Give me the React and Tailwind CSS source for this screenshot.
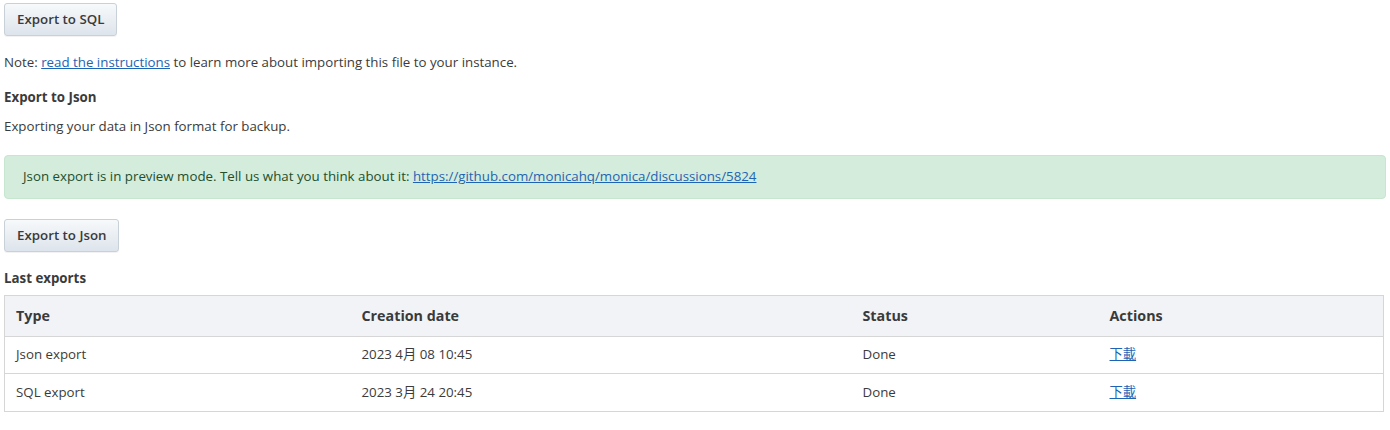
const font = { fontFamily: '"Open Sans", "Noto Sans CJK SC", sans-serif' };

const rows = [
  { type: 'Json export', date: '2023 4月 08 10:45', status: 'Done', h: 'h-[37px]' },
  { type: 'SQL export', date: '2023 3月 24 20:45', status: 'Done', h: 'h-[38px]' },
];

function Button({ children }) {
  return (
    <button className="h-[33px] px-3 rounded-[3px] border border-[#c8d0d8] bg-gradient-to-b from-[#f7f9fb] to-[#dde4eb] text-[13.3px] font-semibold text-[#3a3a3a] shadow-[0_1px_0_rgba(0,0,0,0.05)]">
      {children}
    </button>
  );
}

export default function App() {
  return (
    <div className="bg-white text-[#3b3b3b] text-[13.3px] px-1 pt-[3px] w-[1390px] h-[430px]" style={font}>
      <Button>Export to SQL</Button>

      <p className="mt-[17px] leading-[18px]">
        Note: <a href="#" className="text-[#1e64b4] underline">read the instructions</a> to learn more about importing this file to your instance.
      </p>

      <h3 className="mt-[17px] font-bold leading-[18px]">Export to Json</h3>
      <p className="mt-[11px] leading-[18px]">Exporting your data in Json format for backup.</p>

      <div className="mt-[20px] h-[44px] flex items-center px-[18px] rounded-[4px] border border-[#c6e6cf] bg-[#d4ecdb] text-[#224f2c]">
        <span>
          Json export is in preview mode. Tell us what you think about it:{' '}
          <a href="#" className="text-[#1e64b4] underline">https://github.com/monicahq/monica/discussions/5824</a>
        </span>
      </div>

      <div className="mt-[20px]">
        <Button>Export to Json</Button>
      </div>

      <h3 className="mt-[17px] font-bold leading-[18px]">Last exports</h3>

      <table className="mt-[8px] w-[1380px] table-fixed border border-[#d6d6d6] border-collapse">
        <colgroup>
          <col className="w-[346px]" />
          <col className="w-[501px]" />
          <col className="w-[247px]" />
          <col />
        </colgroup>
        <thead>
          <tr className="bg-[#f2f3f6] h-[41px] text-[14.3px] font-bold text-[#3a3a3a]">
            <th className="text-left pl-[11px]">Type</th>
            <th className="text-left pl-[11px]">Creation date</th>
            <th className="text-left pl-[11px]">Status</th>
            <th className="text-left pl-[11px]">Actions</th>
          </tr>
        </thead>
        <tbody>
          {rows.map((r) => (
            <tr key={r.type} className={`${r.h} border-t border-[#d6d6d6]`}>
              <td className="pl-[11px]">{r.type}</td>
              <td className="pl-[11px]">{r.date}</td>
              <td className="pl-[11px]">{r.status}</td>
              <td className="pl-[11px]">
                <a href="#" className="text-[#1e64b4] underline">下載</a>
              </td>
            </tr>
          ))}
        </tbody>
      </table>
    </div>
  );
}
